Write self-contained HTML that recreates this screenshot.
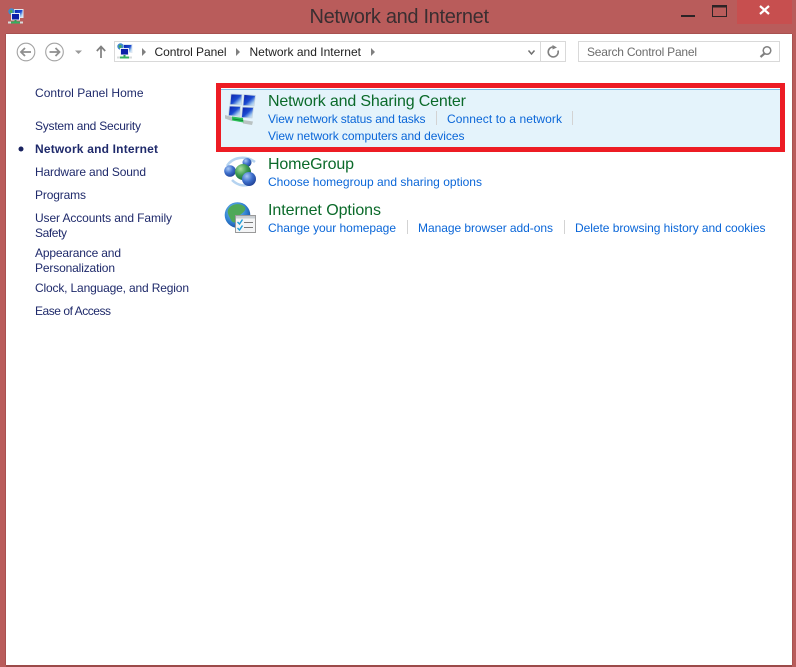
<!DOCTYPE html>
<html><head><meta charset="utf-8"><style>
html,body{margin:0;padding:0;background:#b95c5b;width:796px;height:667px;overflow:hidden}
svg{display:block}
text{font-family:"Liberation Sans",sans-serif;font-size:12px;white-space:pre}
.n{fill:#1f2a6b}.l{fill:#0a66d8}.g{fill:#0b6a2a;font-size:16px}.k{fill:#222}
</style></head><body>
<svg width="796" height="667" viewBox="0 0 796 667" xmlns="http://www.w3.org/2000/svg">
<defs>
<linearGradient id="sc" x1="0" y1="0" x2="1" y2="1"><stop offset="0" stop-color="#0a1fa8"/><stop offset=".5" stop-color="#1a4ad0"/><stop offset=".75" stop-color="#9cc4ec"/><stop offset="1" stop-color="#eef6fc"/></linearGradient>
<radialGradient id="bl" cx=".35" cy=".3" r=".8"><stop offset="0" stop-color="#a8c8f4"/><stop offset=".5" stop-color="#3d6fcc"/><stop offset="1" stop-color="#1c3a8c"/></radialGradient>
<radialGradient id="gr" cx=".35" cy=".3" r=".8"><stop offset="0" stop-color="#a8e0a0"/><stop offset=".5" stop-color="#3d9a50"/><stop offset="1" stop-color="#12603a"/></radialGradient>
<radialGradient id="gl" cx=".4" cy=".35" r=".75"><stop offset="0" stop-color="#7ec8f0"/><stop offset=".6" stop-color="#2f7fd0"/><stop offset="1" stop-color="#143f90"/></radialGradient>
<g id="mini">
<rect x="6.500" y="1.500" width="8.500" height="8" fill="url(#sc)" stroke="#dfe8f2" stroke-width="1"/>
<circle cx="3.500" cy="3.500" r="3.200" fill="#3d8ad0"/><circle cx="3.200" cy="3.500" r="1.500" fill="#48a858"/>
<rect x="3.500" y="5.500" width="8" height="6.500" fill="#0a1fa8" stroke="#e8eef5" stroke-width="1"/>
<rect x="6.500" y="12" width="2" height="2.500" fill="#2f9e54"/>
<rect x="3" y="13.500" width="9" height="2" fill="#34b060"/>
<rect x="0" y="13.500" width="3" height="2" fill="#d8dcdc"/><rect x="12" y="13.500" width="3" height="2" fill="#d8dcdc"/>
</g>
</defs>

<!-- window frame -->
<rect width="796" height="667" fill="#b95c5b"/>
<rect x="6" y="34" width="786" height="631" fill="#fff"/>
<rect x="6" y="665" width="786" height="2" fill="#9c4a49"/>
<rect x="792" y="34" width="1" height="631" fill="#a85150"/>
<rect x="5" y="34" width="1" height="631" fill="#a85150"/>
<rect x="6" y="33" width="786" height="1" fill="#a85150"/>

<!-- title bar -->
<use href="#mini" x="8" y="8"/>
<text x="309.500" y="23" textLength="179.500" style="font-size:20px;fill:#3a2e31">Network and Internet</text>
<rect x="681" y="15" width="14" height="2" fill="#2c2326"/>
<rect x="712.500" y="5.500" width="14" height="11" fill="none" stroke="#2c2326" stroke-width="1"/>
<rect x="712.500" y="5" width="14" height="2.500" fill="#2c2326"/>
<rect x="737" y="0" width="55" height="24" fill="#c74f4f"/>
<path d="M760 6L769 14M769 6L760 14" stroke="#fff" stroke-width="2.200" fill="none"/>

<!-- nav buttons -->
<circle cx="26" cy="52" r="8.800" fill="#fff" stroke="#a3a3a3" stroke-width="1.100"/>
<path d="M31 52H21.500M25 48L21 52L25 56" stroke="#8f8f8f" stroke-width="1.800" fill="none"/>
<circle cx="54.500" cy="52" r="8.800" fill="#fff" stroke="#a3a3a3" stroke-width="1.100"/>
<path d="M49.500 52H59M55.500 48L59.500 52L55.500 56" stroke="#8f8f8f" stroke-width="1.800" fill="none"/>
<path d="M75 50.500H82L78.500 54Z" fill="#9a9a9a"/>
<path d="M101 58V47M96.800 51L101 46.500L105.200 51" stroke="#808080" stroke-width="1.700" fill="none"/>

<!-- address bar -->
<rect x="114.500" y="41.500" width="451" height="20" fill="#fff" stroke="#d9d9d9"/>
<line x1="540.500" y1="42" x2="540.500" y2="61" stroke="#d9d9d9"/>
<use href="#mini" x="117" y="43"/>
<path d="M142 48V56L146 52Z" fill="#808080"/>
<text x="154.500" y="56" textLength="72" class="k">Control Panel</text>
<path d="M236 48V56L240 52Z" fill="#808080"/>
<text x="249.500" y="56" textLength="111.500" class="k">Network and Internet</text>
<path d="M371 48V56L375 52Z" fill="#808080"/>
<path d="M528.500 50.500L531.500 54L534.500 50.500" stroke="#707070" stroke-width="1.500" fill="none"/>
<path d="M558 50.500A5 5 0 1 1 554 47" stroke="#808080" stroke-width="1.600" fill="none"/>
<path d="M552.500 45V49.500L557 47.500Z" fill="#808080"/>

<!-- search -->
<rect x="578.500" y="41.500" width="201" height="20" fill="#fff" stroke="#d9d9d9"/>
<text x="587" y="56" textLength="110" style="fill:#6d6d6d">Search Control Panel</text>
<circle cx="767" cy="50.500" r="3.800" fill="none" stroke="#808080" stroke-width="1.500"/>
<path d="M764.500 53.500L760.500 57" stroke="#808080" stroke-width="2.200"/>

<!-- sidebar -->
<text x="35" y="97" textLength="108.500" class="n">Control Panel Home</text>
<text x="35" y="130" textLength="106" class="n">System and Security</text>
<circle cx="21" cy="149" r="2.500" fill="#1a2360"/>
<text x="35" y="153" textLength="123" class="n" style="font-weight:bold">Network and Internet</text>
<text x="35" y="176" textLength="111" class="n">Hardware and Sound</text>
<text x="35" y="199" textLength="51" class="n">Programs</text>
<text x="35" y="222" textLength="137" class="n">User Accounts and Family</text>
<text x="35" y="237" textLength="32" class="n">Safety</text>
<text x="35" y="257" textLength="86" class="n">Appearance and</text>
<text x="35" y="272" textLength="80" class="n">Personalization</text>
<text x="35" y="292" textLength="154" class="n">Clock, Language, and Region</text>
<text x="35" y="315" textLength="76" class="n">Ease of Access</text>

<!-- highlighted row -->
<rect x="221" y="88" width="559" height="59" fill="#e4f3fb"/>
<rect x="221" y="88" width="559" height="1" fill="#fff"/>
<rect x="221" y="89" width="559" height="1" fill="#7fc0ea"/>
<rect x="218.500" y="85.500" width="564" height="64" fill="none" stroke="#ed1c24" stroke-width="5"/>

<!-- network icon -->
<g>
<path d="M231 94L242 94.500L241.500 105L230 104.500Z" fill="url(#sc)" stroke="#c5d3df" stroke-width=".8"/>
<path d="M244 94.500L255.500 95.500L254 106L243 105.500Z" fill="url(#sc)" stroke="#c5d3df" stroke-width=".8"/>
<path d="M229.500 106L240.500 106.500L240 116.500L228.500 115.500Z" fill="url(#sc)" stroke="#c5d3df" stroke-width=".8"/>
<path d="M242.500 107L253.500 107.500L252 118L241.500 117.500Z" fill="url(#sc)" stroke="#c5d3df" stroke-width=".8"/>
<path d="M225 115L232 117L232 121L225 118.500Z" fill="#b9c2c2"/>
<path d="M243 120L253 121.500L252 125L243 123.500Z" fill="#b9c2c2"/>
<path d="M232 116.500L243 118L243.500 122.500L232 120.500Z" fill="#2fc05a"/>
<path d="M233 119L243 120.500" stroke="#0c8a35" stroke-width="1"/>
</g>
<text x="268" y="106" textLength="198" class="g">Network and Sharing Center</text>
<text x="268" y="123" textLength="157.500" class="l">View network status and tasks</text>
<rect x="436" y="111" width="1" height="14" fill="#d3d3d3"/>
<text x="447" y="123" textLength="115" class="l">Connect to a network</text>
<rect x="572" y="111" width="1" height="14" fill="#d3d3d3"/>
<text x="268" y="140" textLength="196.500" class="l">View network computers and devices</text>

<!-- homegroup icon -->
<g>
<path d="M227 166C232 157 246 155 255 162" stroke="#b5d3f0" stroke-width="2.500" fill="none"/>
<path d="M232 180C238 186 246 187 252 183" stroke="#b5d3f0" stroke-width="2.500" fill="none"/>
<circle cx="247" cy="162.500" r="4.500" fill="url(#bl)"/>
<circle cx="230" cy="171" r="5.800" fill="url(#bl)"/>
<circle cx="243" cy="172" r="8" fill="url(#gr)"/>
<circle cx="249" cy="179" r="7" fill="url(#bl)"/>
</g>
<text x="268" y="169" textLength="86" class="g">HomeGroup</text>
<text x="268" y="186" textLength="214" class="l">Choose homegroup and sharing options</text>

<!-- internet options icon -->
<g>
<circle cx="237.500" cy="215" r="12.800" fill="url(#gl)"/>
<path d="M229 208C233 203 241 203 245 207C247 212 239 214 238 218C237 223 233 224 231 220C229 216 226 212 229 208Z" fill="#4fa858"/>
<rect x="235.500" y="215.500" width="20" height="17" fill="#f4f5f6" stroke="#9a9a9a"/>
<rect x="236" y="216" width="19" height="2.500" fill="#c9ced2"/>
<path d="M237.500 222L239.500 224L242.500 219.500M237.500 228L239.500 230L242.500 225.500" stroke="#1e9ed8" stroke-width="1.400" fill="none"/>
<path d="M244 222.500H253M244 227.500H253" stroke="#7a7a7a" stroke-width="1"/>
</g>
<text x="268" y="215" textLength="113" class="g">Internet Options</text>
<text x="268" y="232" textLength="128" class="l">Change your homepage</text>
<rect x="407" y="220" width="1" height="14" fill="#d3d3d3"/>
<text x="418" y="232" textLength="135" class="l">Manage browser add-ons</text>
<rect x="564" y="220" width="1" height="14" fill="#d3d3d3"/>
<text x="575" y="232" textLength="190.500" class="l">Delete browsing history and cookies</text>
</svg>
</body></html>
